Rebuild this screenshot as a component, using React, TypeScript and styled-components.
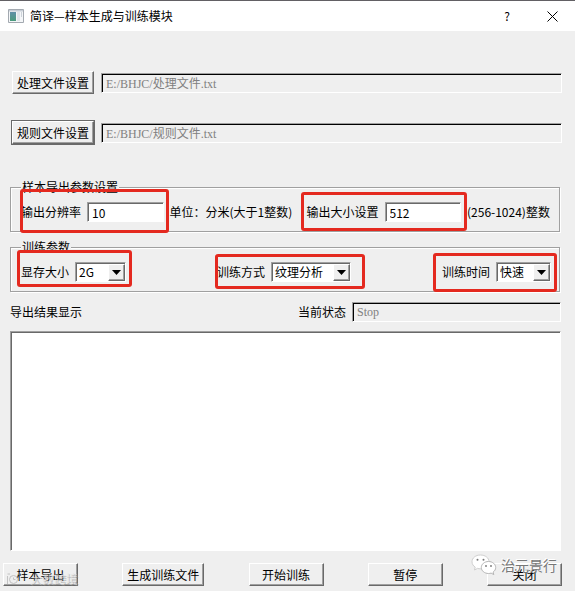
import React from "react";
import styled, { createGlobalStyle, css } from "styled-components";

const FACE = "#efefef";
const SHADE = "#a0a0a0";
const DARK = "#696969";
const RED = "#e4291f";

const GlobalStyle = createGlobalStyle`
  * { box-sizing: border-box; }
  html, body { margin: 0; background: ${FACE}; }
  body, button, input, select, textarea {
    font: 12px/16px "Noto Sans CJK SC", sans-serif;
    color: #000;
  }
`;

const Dialog = styled.div`
  position: relative;
  display: flex;
  flex-direction: column;
  background: ${FACE};
`;

const TitleBar = styled.header`
  display: flex;
  align-items: center;
  gap: 6px;
  height: 31px;
  padding: 0 14px 0 8px;
  border-top: 1px solid #626064;
  background: #fff;
`;

const Title = styled.h1`
  flex: 1;
  margin: 0;
  font-size: 12px;
  font-weight: 400;
  line-height: 16px;
`;

const TitleButton = styled.button`
  display: flex;
  justify-content: center;
  width: 18px;
  margin-left: 21px;
  padding: 0;
  border: 0;
  background: none;
`;

const Files = styled.section`
  display: grid;
  gap: 25px;
  padding: 39px 13px 35px 11px;
`;

const FileRow = styled.div`
  display: flex;
  align-items: center;
  gap: 6px;
  height: 25px;
`;

const PushButton = styled.button<{ $size: "small" | "large"; $active?: boolean }>`
  width: ${(p) => (p.$size === "large" ? 82 : 75)}px;
  height: 23px;
  padding: 0;
  border: 1px solid;
  border-color: #fff ${DARK} ${DARK} #fff;
  background: ${FACE};
  box-shadow: inset -1px -1px ${SHADE};
  white-space: nowrap;
  ${(p) =>
    p.$active &&
    css`
      outline: 1px solid ${DARK};
    `}
`;

const FileButton = styled(PushButton)`
  margin: 0 1px;
`;

const sunken = css`
  min-width: 0;
  border: 1px solid;
  border-color: ${SHADE} #fff #fff ${SHADE};
  border-radius: 0;
  outline: none;
`;

const TextBox = styled.input`
  ${sunken}
  flex: 1 1 auto;
  width: 76px;
  height: 20px;
  padding: 0 4px;
  background: #fff;
  box-shadow: inset 1px 1px ${DARK};
`;

const ReadOnlyBox = styled(TextBox)`
  background: ${FACE};
  box-shadow: inset 1px 1px #000;
  color: #808080;
  font-family: "Liberation Serif", "Noto Sans CJK SC", serif;
`;

const Group = styled.fieldset`
  min-width: 0;
  margin: 0 15px 8px 10px;
  padding: 8px 8px 9px 10px;
  border: 1px solid ${SHADE};
  box-shadow: 1px 1px #fff, inset 1px 1px #fff;
`;

const Legend = styled.legend`
  height: 14px;
  padding: 0 1px;
  background: ${FACE};
  line-height: 14px;
`;

const GroupRow = styled.div<{ $spread?: boolean }>`
  display: flex;
  align-items: center;
  justify-content: ${(p) => (p.$spread ? "space-between" : "flex-start")};
  gap: ${(p) => (p.$spread ? 12 : 6)}px;
  height: 20px;
`;

const Field = styled.div<{ $grow?: boolean }>`
  position: relative;
  display: flex;
  align-items: center;
  gap: 6px;
  flex: ${(p) => (p.$grow ? "1 1 auto" : "0 0 auto")};
`;

const Label = styled.label`
  white-space: nowrap;
`;

const Unit = styled.span<{ $width: number }>`
  flex: 0 0 ${(p) => p.$width}px;
  white-space: nowrap;
`;

const Marker = styled.span<{ $top: number; $right: number; $bottom: number; $left: number }>`
  position: absolute;
  z-index: 1;
  top: -${(p) => p.$top}px;
  right: -${(p) => p.$right}px;
  bottom: -${(p) => p.$bottom}px;
  left: -${(p) => p.$left}px;
  border: 3px solid ${RED};
  border-radius: 3px;
  pointer-events: none;
`;

const SelectFrame = styled.span<{ $width: number }>`
  position: relative;
  display: flex;
  width: ${(p) => p.$width}px;
  height: 20px;
`;

const Select = styled.select`
  ${sunken}
  appearance: none;
  width: 100%;
  padding: 0 18px 0 3px;
  background: #fff;
  box-shadow: inset 1px 1px ${DARK};
`;

const Arrow = styled.span`
  position: absolute;
  top: 2px;
  right: 1px;
  bottom: 1px;
  display: flex;
  align-items: center;
  justify-content: center;
  width: 17px;
  border: 1px solid;
  border-color: #fff ${DARK} ${DARK} #fff;
  background: ${FACE};
  box-shadow: inset -1px -1px ${SHADE};
  pointer-events: none;
`;

const StatusRow = styled.div`
  display: grid;
  grid-template-columns: 288fr 263fr;
  align-items: center;
  margin: 2px 14px 9px 10px;
  height: 20px;
`;

const Results = styled.textarea`
  ${sunken}
  display: block;
  height: 220px;
  margin: 0 14px 12px 10px;
  padding: 4px;
  background: #fff;
  box-shadow: inset 1px 1px ${DARK};
  resize: none;
`;

const Actions = styled.footer`
  display: flex;
  justify-content: space-between;
  padding: 0 13px 5px 3px;
`;

const Watermark = styled.div`
  position: absolute;
  right: 18px;
  bottom: 14px;
  display: flex;
  align-items: center;
  gap: 4px;
  color: #777;
  font-size: 14px;
  line-height: 24px;
  text-shadow: -1px -1px #fff;
  pointer-events: none;
`;

const CornerMark = styled.div`
  position: absolute;
  left: 6px;
  bottom: 4px;
  display: flex;
  align-items: center;
  gap: 9px;
  color: rgba(225, 225, 225, 0.6);
  line-height: 16px;
  text-shadow: 1px 1px rgba(140, 140, 140, 0.5);
  pointer-events: none;
`;

const AppIcon = () => (
  <svg width="16" height="14" viewBox="0 0 16 14" aria-hidden="true">
    <defs>
      <linearGradient id="pane" x1="0" y1="0" x2="0" y2="1">
        <stop offset="0" stopColor="#5f8fa8" />
        <stop offset="1" stopColor="#4a9b7c" />
      </linearGradient>
    </defs>
    <path d="M.5.5h15v13H.5z" fill="#f4f6f8" stroke="#a3a9b0" />
    <path d="M1 1h14v1.5H1z" fill="#c5ccd5" />
    <path d="M2 3h6v9H2z" fill="url(#pane)" />
    <path d="M9 3h3v9H9z" fill="#dfe4e9" />
    <path d="M13 3h1v5h-1z" fill="#cbd1d8" />
  </svg>
);

const ChatIcon = () => (
  <svg width="26" height="22" viewBox="0 0 26 22" aria-hidden="true">
    <path
      d="M9.500 1C4.600 1 1 4 1 7.800c0 2.200 1.200 4.100 3.200 5.300L3.500 16l3-1.600c1 .3 2 .4 3 .4 4.700 0 8.500-3 8.500-7S14.200 1 9.500 1z"
      fill="#fff"
      stroke="#cfcfcf"
    />
    <path
      d="M17.500 7.500c-4 0-7.200 2.700-7.200 6s3.200 6 7.200 6c.9 0 1.800-.1 2.600-.4l2.700 1.500-.7-2.500c1.600-1.100 2.600-2.700 2.600-4.600 0-3.300-3.200-6-7.200-6z"
      fill="#fff"
      stroke="#b5b5b5"
    />
    <g fill="#777">
      <circle cx="6.500" cy="5.800" r="1" />
      <circle cx="12.500" cy="5.800" r="1" />
      <circle cx="15" cy="12" r=".9" />
      <circle cx="20" cy="12" r=".9" />
    </g>
  </svg>
);

const CornerIcon = () => (
  <svg width="15" height="12" viewBox="0 0 15 12" fill="none" stroke="#c2c2c2" aria-hidden="true">
    <path d="M1.500 11V3M1.500 1H4M12 1h2" />
    <circle cx="7.500" cy="6.500" r="4" />
    <path d="M7.500 4.500v2h2" />
  </svg>
);

type DropDownProps = { id: string; label: string; value: string; width: number; marker: [number, number, number, number] };

const DropDown = ({ id, label, value, width, marker }: DropDownProps) => (
  <Field>
    <Label htmlFor={id}>{label}</Label>
    <SelectFrame $width={width}>
      <Select id={id} defaultValue={value}>
        <option>{value}</option>
      </Select>
      <Arrow>
        <svg width="9" height="5" viewBox="0 0 9 5" aria-hidden="true">
          <path d="M0 0h9L4.500 5z" />
        </svg>
      </Arrow>
    </SelectFrame>
    <Marker $top={marker[0]} $right={marker[1]} $bottom={marker[2]} $left={marker[3]} />
  </Field>
);

export default function App() {
  return (
    <Dialog>
      <GlobalStyle />
      <TitleBar>
        <AppIcon />
        <Title>简译—样本生成与训练模块</Title>
        <TitleButton aria-label="帮助">?</TitleButton>
        <TitleButton aria-label="关闭窗口">
          <svg width="11" height="11" viewBox="0 0 11 11" stroke="#000" aria-hidden="true">
            <path d="M.5.5l10 10M10.500.5l-10 10" />
          </svg>
        </TitleButton>
      </TitleBar>

      <Files>
        <FileRow>
          <FileButton $size="large">处理文件设置</FileButton>
          <ReadOnlyBox aria-label="处理文件" readOnly value="E:/BHJC/处理文件.txt" />
        </FileRow>
        <FileRow>
          <FileButton $size="large" $active>规则文件设置</FileButton>
          <ReadOnlyBox aria-label="规则文件" readOnly value="E:/BHJC/规则文件.txt" />
        </FileRow>
      </Files>

      <Group>
        <Legend>样本导出参数设置</Legend>
        <GroupRow>
          <Field $grow>
            <Label htmlFor="resolution">输出分辨率</Label>
            <TextBox id="resolution" defaultValue="10" />
            <Marker $top={13} $right={5} $bottom={11} $left={1} />
          </Field>
          <Unit $width={131}>单位：分米(大于1整数)</Unit>
          <Field $grow>
            <Label htmlFor="size">输出大小设置</Label>
            <TextBox id="size" defaultValue="512" />
            <Marker $top={10} $right={6} $bottom={9} $left={6} />
          </Field>
          <Unit $width={84}>(256-1024)整数</Unit>
        </GroupRow>
      </Group>

      <Group>
        <Legend>训练参数</Legend>
        <GroupRow $spread>
          <DropDown id="memory" label="显存大小" value="2G" width={51} marker={[12, 6, 5, 4]} />
          <DropDown id="method" label="训练方式" value="纹理分析" width={80} marker={[8, 14, 7, 2]} />
          <DropDown id="time" label="训练时间" value="快速" width={55} marker={[9, 6, 10, 9]} />
        </GroupRow>
      </Group>

      <StatusRow>
        <Label htmlFor="results">导出结果显示</Label>
        <Field>
          <Label htmlFor="status">当前状态</Label>
          <ReadOnlyBox id="status" readOnly value="Stop" />
        </Field>
      </StatusRow>

      <Results id="results" readOnly />

      <Actions>
        <PushButton $size="small">样本导出</PushButton>
        <PushButton $size="large">生成训练文件</PushButton>
        <PushButton $size="small">开始训练</PushButton>
        <PushButton $size="small">暂停</PushButton>
        <PushButton $size="small">关闭</PushButton>
      </Actions>

      <CornerMark>
        <CornerIcon />
        <span>大数跨境</span>
      </CornerMark>
      <Watermark>
        <ChatIcon />
        <span>治元景行</span>
      </Watermark>
    </Dialog>
  );
}
